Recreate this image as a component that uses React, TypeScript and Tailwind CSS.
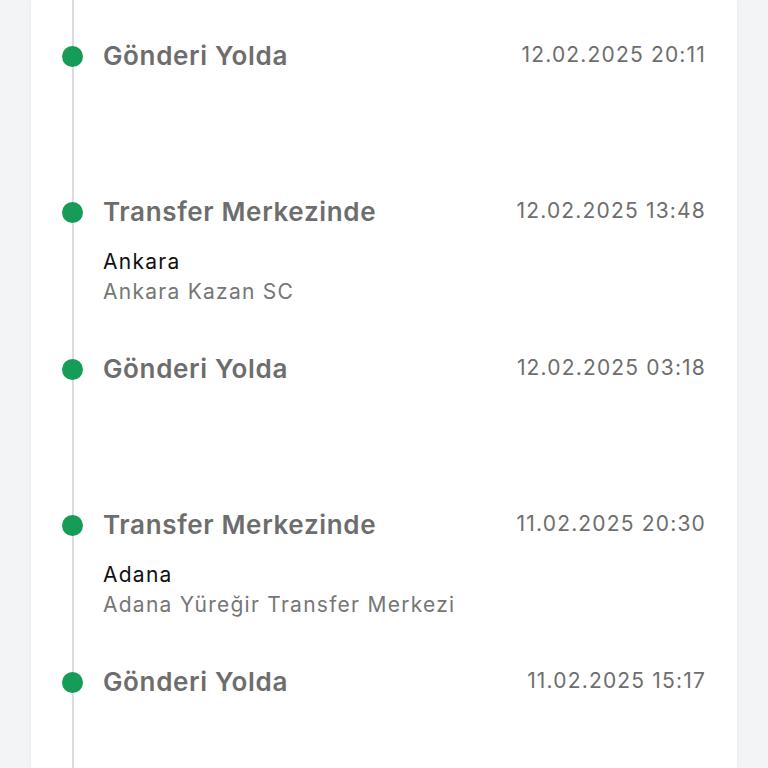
import React from "react";

type Item = {
  title: string;
  date: string;
  city?: string;
  place?: string;
  h: string;
};

const items: Item[] = [
  { title: "Gönderi Yolda", date: "12.02.2025 20:11", h: "h-[156px]" },
  { title: "Transfer Merkezinde", date: "12.02.2025 13:48", city: "Ankara", place: "Ankara Kazan SC", h: "h-[157px]" },
  { title: "Gönderi Yolda", date: "12.02.2025 03:18", h: "h-[156px]" },
  { title: "Transfer Merkezinde", date: "11.02.2025 20:30", city: "Adana", place: "Adana Yüreğir Transfer Merkezi", h: "h-[157px]" },
  { title: "Gönderi Yolda", date: "11.02.2025 15:17", h: "h-[156px]" },
];

export default function App() {
  return (
    <div
      className="h-[768px] w-[768px] overflow-hidden bg-[#f3f4f6]"
      style={{ fontFamily: "Inter, 'Noto Sans', sans-serif" }}
    >
      <div className="relative ml-[31px] h-[768px] w-[706px] overflow-hidden bg-white shadow-[0_0_4px_rgba(0,0,0,0.06)]">
        <div className="absolute left-[41px] top-0 h-full w-[2px] bg-[#dcdcdc]" />
        <div className="relative flex flex-col pl-[31px] pr-[31px] pt-[39px]">
          {items.map((it, i) => (
            <div key={i} className={`flex ${it.h}`}>
              <div className="mt-[7px] h-[21px] w-[21px] shrink-0 rounded-full bg-[#159d57]" />
              <div className="ml-[20px] flex min-w-0 flex-1 flex-col">
                <div className="flex items-start justify-between">
                  <span className="mt-[1px] text-[26px] font-semibold leading-[32px] tracking-[0.025em] text-[#6d6d6d]">
                    {it.title}
                  </span>
                  <span className="mt-[2px] text-[21px] leading-[28px] tracking-[0.056em] text-[#6e6e6e]">
                    {it.date}
                  </span>
                </div>
                {it.city && (
                  <div className="mt-[19px] flex flex-col text-[21px] leading-[30px] tracking-[0.06em]">
                    <span className="text-[#111111]">{it.city}</span>
                    <span className="text-[#767676]">{it.place}</span>
                  </div>
                )}
              </div>
            </div>
          ))}
        </div>
      </div>
    </div>
  );
}
